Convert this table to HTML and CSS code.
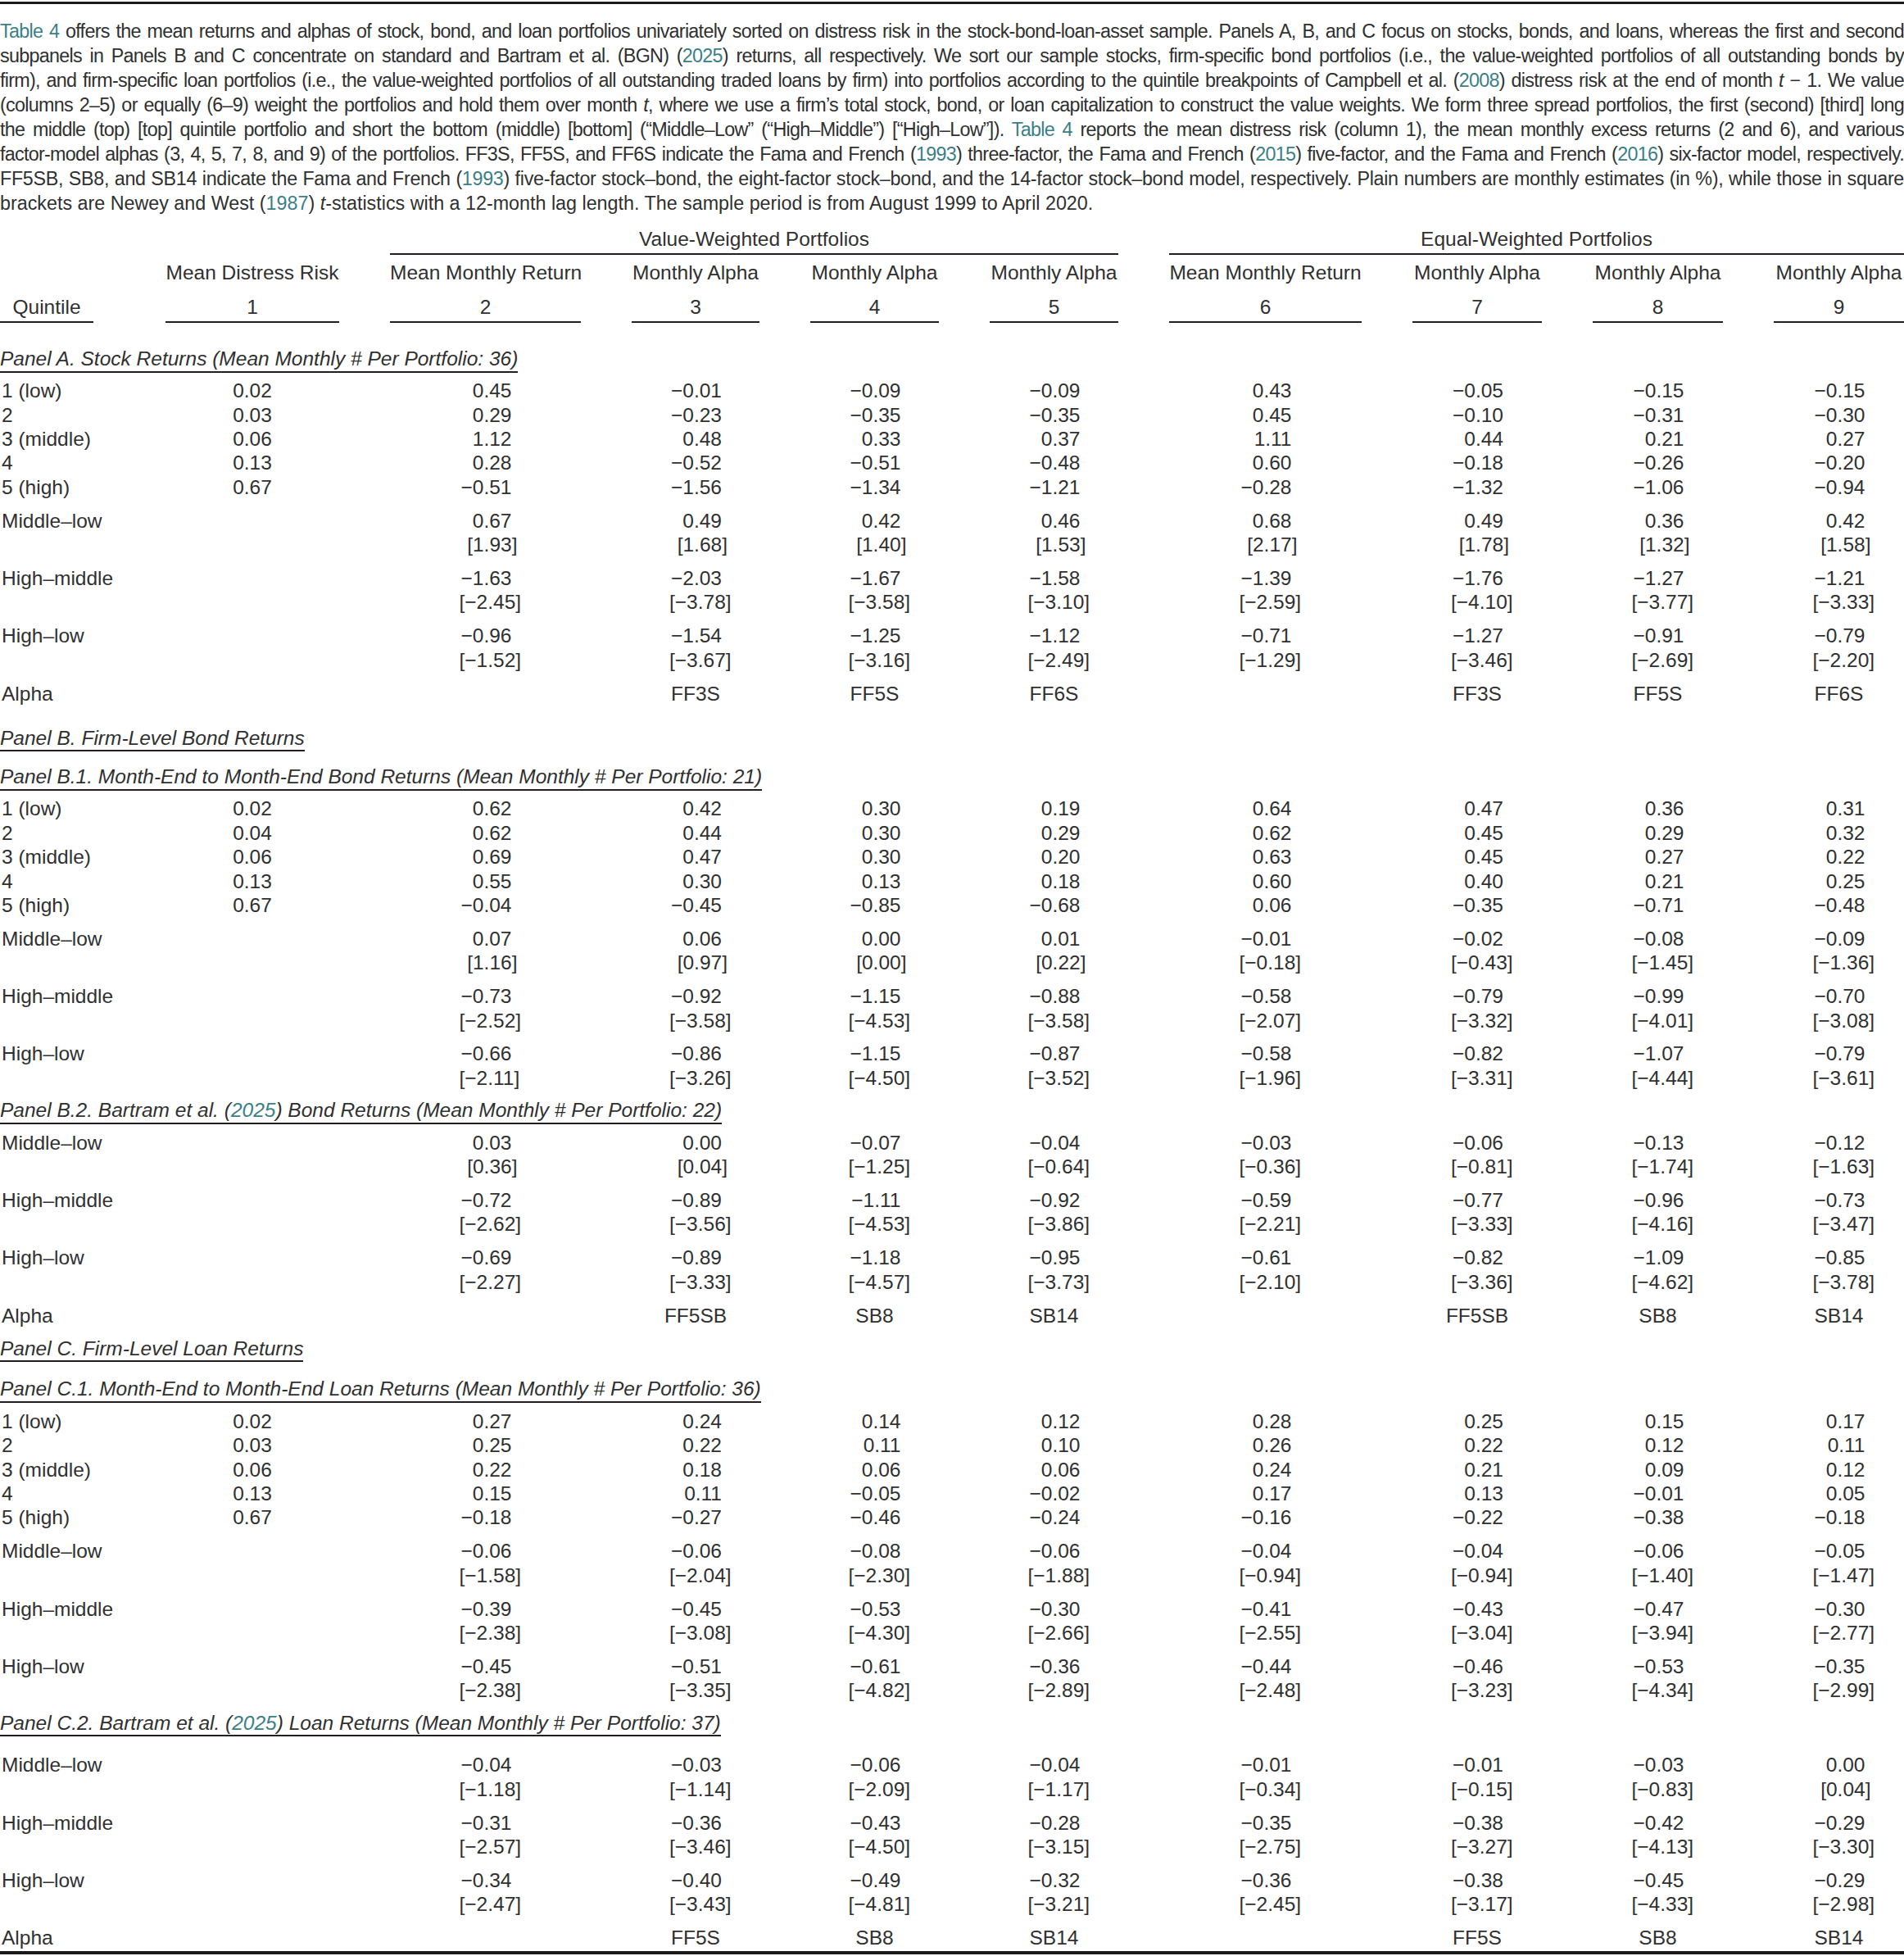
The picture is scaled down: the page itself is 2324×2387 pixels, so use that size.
FILE: index.html
```html
<!DOCTYPE html>
<html lang="en">
<head>
<meta charset="utf-8">
<title>Table 4</title>
<link rel="stylesheet" href="styles.css">
</head>
<body>
<div class="page">
  <div class="caption">
    <span class="ln tight"><a class="ref">Table 4</a> offers the mean returns and alphas of stock, bond, and loan portfolios univariately sorted on distress risk in the stock-bond-loan-asset sample. Panels A, B, and C focus on stocks, bonds, and loans, whereas the first and second</span>
    <span class="ln tight">subpanels in Panels B and C concentrate on standard and Bartram et al. (BGN) (<a class="ref">2025</a>) returns, all respectively. We sort our sample stocks, firm-specific bond portfolios (i.e., the value-weighted portfolios of all outstanding bonds by</span>
    <span class="ln tight">firm), and firm-specific loan portfolios (i.e., the value-weighted portfolios of all outstanding traded loans by firm) into portfolios according to the quintile breakpoints of Campbell et al. (<a class="ref">2008</a>) distress risk at the end of month <i>t</i> − 1. We value</span>
    <span class="ln tight">(columns 2–5) or equally (6–9) weight the portfolios and hold them over month <i>t</i>, where we use a firm’s total stock, bond, or loan capitalization to construct the value weights. We form three spread portfolios, the first (second) [third] long</span>
    <span class="ln tight">the middle (top) [top] quintile portfolio and short the bottom (middle) [bottom] (“Middle–Low” (“High–Middle”) [“High–Low”]). <a class="ref">Table 4</a> reports the mean distress risk (column 1), the mean monthly excess returns (2 and 6), and various</span>
    <span class="ln tight">factor-model alphas (3, 4, 5, 7, 8, and 9) of the portfolios. FF3S, FF5S, and FF6S indicate the Fama and French (<a class="ref">1993</a>) three-factor, the Fama and French (<a class="ref">2015</a>) five-factor, and the Fama and French (<a class="ref">2016</a>) six-factor model, respectively.</span>
    <span class="ln semi">FF5SB, SB8, and SB14 indicate the Fama and French (<a class="ref">1993</a>) five-factor stock–bond, the eight-factor stock–bond, and the 14-factor stock–bond model, respectively. Plain numbers are monthly estimates (in %), while those in square</span>
    <span class="ln last">brackets are Newey and West (<a class="ref">1987</a>) <i>t</i>-statistics with a 12-month lag length. The sample period is from August 1999 to April 2020.</span>
  </div>

  <div class="table">
    <div class="row hgroup">
      <div class="grp vw">Value-Weighted Portfolios</div>
      <div class="grp ew">Equal-Weighted Portfolios</div>
    </div>
    <div class="row htitle">
      <div></div>
      <div>Mean Distress Risk</div>
      <div>Mean Monthly Return</div>
      <div>Monthly Alpha</div>
      <div>Monthly Alpha</div>
      <div>Monthly Alpha</div>
      <div>Mean Monthly Return</div>
      <div>Monthly Alpha</div>
      <div>Monthly Alpha</div>
      <div>Monthly Alpha</div>
    </div>
    <div class="row hnum">
      <div class="q"><span>Quintile</span></div>
      <div>1</div><div>2</div><div>3</div><div>4</div><div>5</div><div>6</div><div>7</div><div>8</div><div>9</div>
    </div>

    <!-- Panel A -->
    <div class="panel panel-a"><span>Panel A. Stock Returns (Mean Monthly # Per Portfolio: 36)</span></div>
    <div class="rows first">
      <div class="row"><div class="lab">1 (low)</div><div class="c1">0.02</div><div class="n">0.45</div><div class="n">−0.01</div><div class="n">−0.09</div><div class="n">−0.09</div><div class="n">0.43</div><div class="n">−0.05</div><div class="n">−0.15</div><div class="n">−0.15</div></div>
      <div class="row"><div class="lab">2</div><div class="c1">0.03</div><div class="n">0.29</div><div class="n">−0.23</div><div class="n">−0.35</div><div class="n">−0.35</div><div class="n">0.45</div><div class="n">−0.10</div><div class="n">−0.31</div><div class="n">−0.30</div></div>
      <div class="row"><div class="lab">3 (middle)</div><div class="c1">0.06</div><div class="n">1.12</div><div class="n">0.48</div><div class="n">0.33</div><div class="n">0.37</div><div class="n">1.11</div><div class="n">0.44</div><div class="n">0.21</div><div class="n">0.27</div></div>
      <div class="row"><div class="lab">4</div><div class="c1">0.13</div><div class="n">0.28</div><div class="n">−0.52</div><div class="n">−0.51</div><div class="n">−0.48</div><div class="n">0.60</div><div class="n">−0.18</div><div class="n">−0.26</div><div class="n">−0.20</div></div>
      <div class="row"><div class="lab">5 (high)</div><div class="c1">0.67</div><div class="n">−0.51</div><div class="n">−1.56</div><div class="n">−1.34</div><div class="n">−1.21</div><div class="n">−0.28</div><div class="n">−1.32</div><div class="n">−1.06</div><div class="n">−0.94</div></div>
    </div>
    <div class="row spread">
      <div class="lab">Middle–low</div><div></div>
      <div class="n"><div>0.67</div><div class="t">[1.93]</div></div>
      <div class="n"><div>0.49</div><div class="t">[1.68]</div></div>
      <div class="n"><div>0.42</div><div class="t">[1.40]</div></div>
      <div class="n"><div>0.46</div><div class="t">[1.53]</div></div>
      <div class="n"><div>0.68</div><div class="t">[2.17]</div></div>
      <div class="n"><div>0.49</div><div class="t">[1.78]</div></div>
      <div class="n"><div>0.36</div><div class="t">[1.32]</div></div>
      <div class="n"><div>0.42</div><div class="t">[1.58]</div></div>
    </div>
    <div class="row spread">
      <div class="lab">High–middle</div><div></div>
      <div class="n"><div>−1.63</div><div class="t">[−2.45]</div></div>
      <div class="n"><div>−2.03</div><div class="t">[−3.78]</div></div>
      <div class="n"><div>−1.67</div><div class="t">[−3.58]</div></div>
      <div class="n"><div>−1.58</div><div class="t">[−3.10]</div></div>
      <div class="n"><div>−1.39</div><div class="t">[−2.59]</div></div>
      <div class="n"><div>−1.76</div><div class="t">[−4.10]</div></div>
      <div class="n"><div>−1.27</div><div class="t">[−3.77]</div></div>
      <div class="n"><div>−1.21</div><div class="t">[−3.33]</div></div>
    </div>
    <div class="row spread">
      <div class="lab">High–low</div><div></div>
      <div class="n"><div>−0.96</div><div class="t">[−1.52]</div></div>
      <div class="n"><div>−1.54</div><div class="t">[−3.67]</div></div>
      <div class="n"><div>−1.25</div><div class="t">[−3.16]</div></div>
      <div class="n"><div>−1.12</div><div class="t">[−2.49]</div></div>
      <div class="n"><div>−0.71</div><div class="t">[−1.29]</div></div>
      <div class="n"><div>−1.27</div><div class="t">[−3.46]</div></div>
      <div class="n"><div>−0.91</div><div class="t">[−2.69]</div></div>
      <div class="n"><div>−0.79</div><div class="t">[−2.20]</div></div>
    </div>
    <div class="row spread">
      <div class="lab">Alpha</div><div></div><div></div>
      <div class="a">FF3S</div><div class="a">FF5S</div><div class="a">FF6S</div><div></div>
      <div class="a">FF3S</div><div class="a">FF5S</div><div class="a">FF6S</div>
    </div>

    <!-- Panel B -->
    <div class="panel panel-b"><span>Panel B. Firm-Level Bond Returns</span></div>
    <div class="panel sub"><span>Panel B.1. Month-End to Month-End Bond Returns (Mean Monthly # Per Portfolio: 21)</span></div>
    <div class="rows first">
      <div class="row"><div class="lab">1 (low)</div><div class="c1">0.02</div><div class="n">0.62</div><div class="n">0.42</div><div class="n">0.30</div><div class="n">0.19</div><div class="n">0.64</div><div class="n">0.47</div><div class="n">0.36</div><div class="n">0.31</div></div>
      <div class="row"><div class="lab">2</div><div class="c1">0.04</div><div class="n">0.62</div><div class="n">0.44</div><div class="n">0.30</div><div class="n">0.29</div><div class="n">0.62</div><div class="n">0.45</div><div class="n">0.29</div><div class="n">0.32</div></div>
      <div class="row"><div class="lab">3 (middle)</div><div class="c1">0.06</div><div class="n">0.69</div><div class="n">0.47</div><div class="n">0.30</div><div class="n">0.20</div><div class="n">0.63</div><div class="n">0.45</div><div class="n">0.27</div><div class="n">0.22</div></div>
      <div class="row"><div class="lab">4</div><div class="c1">0.13</div><div class="n">0.55</div><div class="n">0.30</div><div class="n">0.13</div><div class="n">0.18</div><div class="n">0.60</div><div class="n">0.40</div><div class="n">0.21</div><div class="n">0.25</div></div>
      <div class="row"><div class="lab">5 (high)</div><div class="c1">0.67</div><div class="n">−0.04</div><div class="n">−0.45</div><div class="n">−0.85</div><div class="n">−0.68</div><div class="n">0.06</div><div class="n">−0.35</div><div class="n">−0.71</div><div class="n">−0.48</div></div>
    </div>
    <div class="row spread">
      <div class="lab">Middle–low</div><div></div>
      <div class="n"><div>0.07</div><div class="t">[1.16]</div></div>
      <div class="n"><div>0.06</div><div class="t">[0.97]</div></div>
      <div class="n"><div>0.00</div><div class="t">[0.00]</div></div>
      <div class="n"><div>0.01</div><div class="t">[0.22]</div></div>
      <div class="n"><div>−0.01</div><div class="t">[−0.18]</div></div>
      <div class="n"><div>−0.02</div><div class="t">[−0.43]</div></div>
      <div class="n"><div>−0.08</div><div class="t">[−1.45]</div></div>
      <div class="n"><div>−0.09</div><div class="t">[−1.36]</div></div>
    </div>
    <div class="row spread">
      <div class="lab">High–middle</div><div></div>
      <div class="n"><div>−0.73</div><div class="t">[−2.52]</div></div>
      <div class="n"><div>−0.92</div><div class="t">[−3.58]</div></div>
      <div class="n"><div>−1.15</div><div class="t">[−4.53]</div></div>
      <div class="n"><div>−0.88</div><div class="t">[−3.58]</div></div>
      <div class="n"><div>−0.58</div><div class="t">[−2.07]</div></div>
      <div class="n"><div>−0.79</div><div class="t">[−3.32]</div></div>
      <div class="n"><div>−0.99</div><div class="t">[−4.01]</div></div>
      <div class="n"><div>−0.70</div><div class="t">[−3.08]</div></div>
    </div>
    <div class="row spread">
      <div class="lab">High–low</div><div></div>
      <div class="n"><div>−0.66</div><div class="t">[−2.11]</div></div>
      <div class="n"><div>−0.86</div><div class="t">[−3.26]</div></div>
      <div class="n"><div>−1.15</div><div class="t">[−4.50]</div></div>
      <div class="n"><div>−0.87</div><div class="t">[−3.52]</div></div>
      <div class="n"><div>−0.58</div><div class="t">[−1.96]</div></div>
      <div class="n"><div>−0.82</div><div class="t">[−3.31]</div></div>
      <div class="n"><div>−1.07</div><div class="t">[−4.44]</div></div>
      <div class="n"><div>−0.79</div><div class="t">[−3.61]</div></div>
    </div>

    <div class="panel"><span>Panel B.2. Bartram et al. (<a class="ref">2025</a>) Bond Returns (Mean Monthly # Per Portfolio: 22)</span></div>
    <div class="row spread first">
      <div class="lab">Middle–low</div><div></div>
      <div class="n"><div>0.03</div><div class="t">[0.36]</div></div>
      <div class="n"><div>0.00</div><div class="t">[0.04]</div></div>
      <div class="n"><div>−0.07</div><div class="t">[−1.25]</div></div>
      <div class="n"><div>−0.04</div><div class="t">[−0.64]</div></div>
      <div class="n"><div>−0.03</div><div class="t">[−0.36]</div></div>
      <div class="n"><div>−0.06</div><div class="t">[−0.81]</div></div>
      <div class="n"><div>−0.13</div><div class="t">[−1.74]</div></div>
      <div class="n"><div>−0.12</div><div class="t">[−1.63]</div></div>
    </div>
    <div class="row spread">
      <div class="lab">High–middle</div><div></div>
      <div class="n"><div>−0.72</div><div class="t">[−2.62]</div></div>
      <div class="n"><div>−0.89</div><div class="t">[−3.56]</div></div>
      <div class="n"><div>−1.11</div><div class="t">[−4.53]</div></div>
      <div class="n"><div>−0.92</div><div class="t">[−3.86]</div></div>
      <div class="n"><div>−0.59</div><div class="t">[−2.21]</div></div>
      <div class="n"><div>−0.77</div><div class="t">[−3.33]</div></div>
      <div class="n"><div>−0.96</div><div class="t">[−4.16]</div></div>
      <div class="n"><div>−0.73</div><div class="t">[−3.47]</div></div>
    </div>
    <div class="row spread">
      <div class="lab">High–low</div><div></div>
      <div class="n"><div>−0.69</div><div class="t">[−2.27]</div></div>
      <div class="n"><div>−0.89</div><div class="t">[−3.33]</div></div>
      <div class="n"><div>−1.18</div><div class="t">[−4.57]</div></div>
      <div class="n"><div>−0.95</div><div class="t">[−3.73]</div></div>
      <div class="n"><div>−0.61</div><div class="t">[−2.10]</div></div>
      <div class="n"><div>−0.82</div><div class="t">[−3.36]</div></div>
      <div class="n"><div>−1.09</div><div class="t">[−4.62]</div></div>
      <div class="n"><div>−0.85</div><div class="t">[−3.78]</div></div>
    </div>
    <div class="row spread">
      <div class="lab">Alpha</div><div></div><div></div>
      <div class="a">FF5SB</div><div class="a">SB8</div><div class="a">SB14</div><div></div>
      <div class="a">FF5SB</div><div class="a">SB8</div><div class="a">SB14</div>
    </div>

    <!-- Panel C -->
    <div class="panel panel-c"><span>Panel C. Firm-Level Loan Returns</span></div>
    <div class="panel sub sub-c"><span>Panel C.1. Month-End to Month-End Loan Returns (Mean Monthly # Per Portfolio: 36)</span></div>
    <div class="rows first first-c">
      <div class="row"><div class="lab">1 (low)</div><div class="c1">0.02</div><div class="n">0.27</div><div class="n">0.24</div><div class="n">0.14</div><div class="n">0.12</div><div class="n">0.28</div><div class="n">0.25</div><div class="n">0.15</div><div class="n">0.17</div></div>
      <div class="row"><div class="lab">2</div><div class="c1">0.03</div><div class="n">0.25</div><div class="n">0.22</div><div class="n">0.11</div><div class="n">0.10</div><div class="n">0.26</div><div class="n">0.22</div><div class="n">0.12</div><div class="n">0.11</div></div>
      <div class="row"><div class="lab">3 (middle)</div><div class="c1">0.06</div><div class="n">0.22</div><div class="n">0.18</div><div class="n">0.06</div><div class="n">0.06</div><div class="n">0.24</div><div class="n">0.21</div><div class="n">0.09</div><div class="n">0.12</div></div>
      <div class="row"><div class="lab">4</div><div class="c1">0.13</div><div class="n">0.15</div><div class="n">0.11</div><div class="n">−0.05</div><div class="n">−0.02</div><div class="n">0.17</div><div class="n">0.13</div><div class="n">−0.01</div><div class="n">0.05</div></div>
      <div class="row"><div class="lab">5 (high)</div><div class="c1">0.67</div><div class="n">−0.18</div><div class="n">−0.27</div><div class="n">−0.46</div><div class="n">−0.24</div><div class="n">−0.16</div><div class="n">−0.22</div><div class="n">−0.38</div><div class="n">−0.18</div></div>
    </div>
    <div class="row spread">
      <div class="lab">Middle–low</div><div></div>
      <div class="n"><div>−0.06</div><div class="t">[−1.58]</div></div>
      <div class="n"><div>−0.06</div><div class="t">[−2.04]</div></div>
      <div class="n"><div>−0.08</div><div class="t">[−2.30]</div></div>
      <div class="n"><div>−0.06</div><div class="t">[−1.88]</div></div>
      <div class="n"><div>−0.04</div><div class="t">[−0.94]</div></div>
      <div class="n"><div>−0.04</div><div class="t">[−0.94]</div></div>
      <div class="n"><div>−0.06</div><div class="t">[−1.40]</div></div>
      <div class="n"><div>−0.05</div><div class="t">[−1.47]</div></div>
    </div>
    <div class="row spread">
      <div class="lab">High–middle</div><div></div>
      <div class="n"><div>−0.39</div><div class="t">[−2.38]</div></div>
      <div class="n"><div>−0.45</div><div class="t">[−3.08]</div></div>
      <div class="n"><div>−0.53</div><div class="t">[−4.30]</div></div>
      <div class="n"><div>−0.30</div><div class="t">[−2.66]</div></div>
      <div class="n"><div>−0.41</div><div class="t">[−2.55]</div></div>
      <div class="n"><div>−0.43</div><div class="t">[−3.04]</div></div>
      <div class="n"><div>−0.47</div><div class="t">[−3.94]</div></div>
      <div class="n"><div>−0.30</div><div class="t">[−2.77]</div></div>
    </div>
    <div class="row spread">
      <div class="lab">High–low</div><div></div>
      <div class="n"><div>−0.45</div><div class="t">[−2.38]</div></div>
      <div class="n"><div>−0.51</div><div class="t">[−3.35]</div></div>
      <div class="n"><div>−0.61</div><div class="t">[−4.82]</div></div>
      <div class="n"><div>−0.36</div><div class="t">[−2.89]</div></div>
      <div class="n"><div>−0.44</div><div class="t">[−2.48]</div></div>
      <div class="n"><div>−0.46</div><div class="t">[−3.23]</div></div>
      <div class="n"><div>−0.53</div><div class="t">[−4.34]</div></div>
      <div class="n"><div>−0.35</div><div class="t">[−2.99]</div></div>
    </div>

    <div class="panel"><span>Panel C.2. Bartram et al. (<a class="ref">2025</a>) Loan Returns (Mean Monthly # Per Portfolio: 37)</span></div>
    <div class="row spread first-wide">
      <div class="lab">Middle–low</div><div></div>
      <div class="n"><div>−0.04</div><div class="t">[−1.18]</div></div>
      <div class="n"><div>−0.03</div><div class="t">[−1.14]</div></div>
      <div class="n"><div>−0.06</div><div class="t">[−2.09]</div></div>
      <div class="n"><div>−0.04</div><div class="t">[−1.17]</div></div>
      <div class="n"><div>−0.01</div><div class="t">[−0.34]</div></div>
      <div class="n"><div>−0.01</div><div class="t">[−0.15]</div></div>
      <div class="n"><div>−0.03</div><div class="t">[−0.83]</div></div>
      <div class="n"><div>0.00</div><div class="t">[0.04]</div></div>
    </div>
    <div class="row spread">
      <div class="lab">High–middle</div><div></div>
      <div class="n"><div>−0.31</div><div class="t">[−2.57]</div></div>
      <div class="n"><div>−0.36</div><div class="t">[−3.46]</div></div>
      <div class="n"><div>−0.43</div><div class="t">[−4.50]</div></div>
      <div class="n"><div>−0.28</div><div class="t">[−3.15]</div></div>
      <div class="n"><div>−0.35</div><div class="t">[−2.75]</div></div>
      <div class="n"><div>−0.38</div><div class="t">[−3.27]</div></div>
      <div class="n"><div>−0.42</div><div class="t">[−4.13]</div></div>
      <div class="n"><div>−0.29</div><div class="t">[−3.30]</div></div>
    </div>
    <div class="row spread">
      <div class="lab">High–low</div><div></div>
      <div class="n"><div>−0.34</div><div class="t">[−2.47]</div></div>
      <div class="n"><div>−0.40</div><div class="t">[−3.43]</div></div>
      <div class="n"><div>−0.49</div><div class="t">[−4.81]</div></div>
      <div class="n"><div>−0.32</div><div class="t">[−3.21]</div></div>
      <div class="n"><div>−0.36</div><div class="t">[−2.45]</div></div>
      <div class="n"><div>−0.38</div><div class="t">[−3.17]</div></div>
      <div class="n"><div>−0.45</div><div class="t">[−4.33]</div></div>
      <div class="n"><div>−0.29</div><div class="t">[−2.98]</div></div>
    </div>
    <div class="row spread">
      <div class="lab">Alpha</div><div></div><div></div>
      <div class="a">FF5S</div><div class="a">SB8</div><div class="a">SB14</div><div></div>
      <div class="a">FF5S</div><div class="a">SB8</div><div class="a">SB14</div>
    </div>
  </div>
</div>
</body>
</html>
```

FILE: styles.css
```css
html, body {
  margin: 0;
  padding: 0;
  background: #ffffff;
}

body {
  font-family: "Liberation Sans", Arial, sans-serif;
  color: #303030;
}

.page {
  width: 2324px;
  margin-top: 2px;
  border-top: 3px solid #1a1a1a;
  border-bottom: 4px solid #1a1a1a;
  padding-bottom: 1px;
}

/* ---------- caption ---------- */
.caption {
  margin-top: 18px;
  font-size: 23.3px;
  line-height: 30px;
}

.caption .ln {
  display: block;
  text-align: justify;
  text-align-last: justify;
}

.caption .ln.tight {
  letter-spacing: -0.7px;
}

.caption .ln.semi {
  letter-spacing: -0.3px;
}

.caption .ln.last {
  text-align-last: left;
}

.ref {
  color: #3b7f86;
  text-decoration: none;
}

/* ---------- table ---------- */
.table {
  font-size: 24.5px;
  line-height: 29.4px;
}

.row {
  display: grid;
  grid-template-columns: 140px 212px 233px 156px 157px 157px 235px 158px 159px 1fr;
  column-gap: 62px;
  white-space: nowrap;
}

.hgroup {
  margin-top: 14px;
}

.grp {
  text-align: center;
  padding-bottom: 3px;
  border-bottom: 2px solid #231f20;
}

.vw { grid-column: 3 / 7; }
.ew { grid-column: 7 / 11; }

.htitle {
  margin-top: 7px;
  text-align: center;
}

.hnum {
  margin-top: 12px;
  text-align: center;
}

.hnum > div {
  padding-bottom: 3px;
  border-bottom: 2px solid #231f20;
}

.hnum > .q {
  border-bottom: none;
  padding-bottom: 0;
  text-align: left;
}

.hnum > .q span {
  display: inline-block;
  width: 114px;
  text-align: center;
  padding-bottom: 3px;
  border-bottom: 2px solid #231f20;
}

/* panel titles */
.panel {
  margin-top: 10px;
  font-style: italic;
}

.panel span {
  display: inline-block;
  border-bottom: 2px solid #231f20;
}

.panel.panel-a { margin-top: 29px; }
.panel.panel-b { margin-top: 25px; }
.panel.panel-c { margin-top: 11px; }
.panel.sub { margin-top: 16px; }
.panel.sub-c { margin-top: 18px; }

.rows.first { margin-top: 7.5px; }
.rows.first-c { margin-top: 8px; }

/* cells */
.lab {
  text-align: left;
  padding-left: 2px;
}

.c1 {
  text-align: center;
}

.n {
  justify-self: center;
  width: 64px;
  text-align: right;
}

.n .t {
  margin-right: -7px;
}

.a {
  text-align: center;
}

.spread { margin-top: 11.5px; }
.spread.first { margin-top: 8px; }
.spread.first-wide { margin-top: 20px; }
```
